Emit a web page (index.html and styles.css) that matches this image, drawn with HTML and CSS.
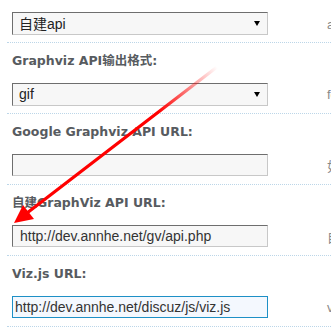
FILE: index.html
```html
<!DOCTYPE html>
<html>
<head>
<meta charset="utf-8">
<link rel="stylesheet" href="styles.css">
</head>
<body>
<div class="page">
  <div class="form">
    <div class="row row-first">
      <div class="field">
        <span class="select-wrap"><select class="select"><option>自建api</option></select></span>
        <span class="desc">api类型</span>
      </div>
    </div>
    <div class="row">
      <div class="label">Graphviz API输出格式:</div>
      <div class="field">
        <span class="select-wrap"><select class="select"><option>gif</option></select></span>
        <span class="desc">format</span>
      </div>
    </div>
    <div class="row">
      <div class="label">Google Graphviz API URL:</div>
      <div class="field">
        <input class="text" type="text" value="">
        <span class="desc">如果使用</span>
      </div>
    </div>
    <div class="row">
      <div class="label">自建GraphViz API URL:</div>
      <div class="field">
        <input class="text" type="text" value="http://dev.annhe.net/gv/api.php">
        <span class="desc">自建</span>
      </div>
    </div>
    <div class="row">
      <div class="label">Viz.js URL:</div>
      <div class="field">
        <input class="text text-focus" type="text" value="http://dev.annhe.net/discuz/js/viz.js">
        <span class="desc">viz.js</span>
      </div>
    </div>
  </div>
  <svg class="arrow" width="331" height="333" viewBox="0 0 331 333">
    <defs>
      <linearGradient id="fade" gradientUnits="userSpaceOnUse" x1="217" y1="67" x2="158" y2="112">
        <stop offset="0" stop-color="#ff0000" stop-opacity="0"/>
        <stop offset="1" stop-color="#ff0000" stop-opacity="1"/>
      </linearGradient>
    </defs>
    <line x1="217" y1="67" x2="27" y2="213" stroke="url(#fade)" stroke-width="3.2" stroke-linecap="round"/>
    <polygon points="14,223 23,205 34,219" fill="#ff0000"/>
  </svg>
</div>
</body>
</html>
```
FILE: styles.css
```css
html, body {
  margin: 0;
  padding: 0;
  background: #ffffff;
}

.page {
  position: relative;
  width: 331px;
  height: 333px;
  overflow: hidden;
  font-family: "Liberation Sans", Arial, "Noto Sans CJK SC", sans-serif;
}

.form {
  padding-left: 7px;
  width: 420px;
}

.row {
  border-bottom: 1px dotted #bcd6e8;
  padding: 8px 0 8px 5px;
}

.row-first {
  padding-top: 12px;
  padding-bottom: 7px;
}

.label {
  height: 20px;
  line-height: 20px;
  margin-bottom: 12px;
  font-family: "DejaVu Sans", Verdana, "Noto Sans CJK SC", sans-serif;
  font-size: 12.5px;
  font-weight: bold;
  color: #575b60;
  white-space: nowrap;
}

.field {
  display: flex;
  align-items: center;
  height: 22px;
}

.row-first .field {
  height: 23px;
}

.select-wrap {
  position: relative;
  display: block;
  width: 256px;
  height: 23px;
}

.select-wrap::after {
  content: "";
  position: absolute;
  right: 8px;
  top: 9px;
  border-top: 5px solid #000;
  border-left: 3px solid transparent;
  border-right: 3px solid transparent;
}

.select {
  -webkit-appearance: none;
  appearance: none;
  box-sizing: border-box;
  width: 256px;
  height: 23px;
  margin: 0;
  padding: 0 0 0 6px;
  border: 1px solid;
  border-color: #6e6e6e #c8c8c8 #c8c8c8 #6e6e6e;
  border-radius: 0;
  background: #f7f7f7;
  color: #222;
  font-family: "Liberation Sans", Arial, "Noto Sans CJK SC", sans-serif;
  font-size: 14px;
  outline: none;
}

.text {
  box-sizing: border-box;
  width: 256px;
  height: 22px;
  margin: 0;
  padding: 0 0 0 7px;
  border: 1px solid;
  border-color: #6e6e6e #c8c8c8 #c8c8c8 #6e6e6e;
  border-radius: 0;
  background: #f7f7f7;
  color: #333;
  font-family: "Liberation Sans", Arial, sans-serif;
  font-size: 14px;
  outline: none;
}

.text-focus {
  border: 1px solid #1e90c6;
  background: #f4f8fe;
  padding-left: 2px;
}

.desc {
  margin-left: 59px;
  font-size: 13px;
  color: #888;
  white-space: nowrap;
}

.arrow {
  position: absolute;
  left: 0;
  top: 0;
  pointer-events: none;
}
```
